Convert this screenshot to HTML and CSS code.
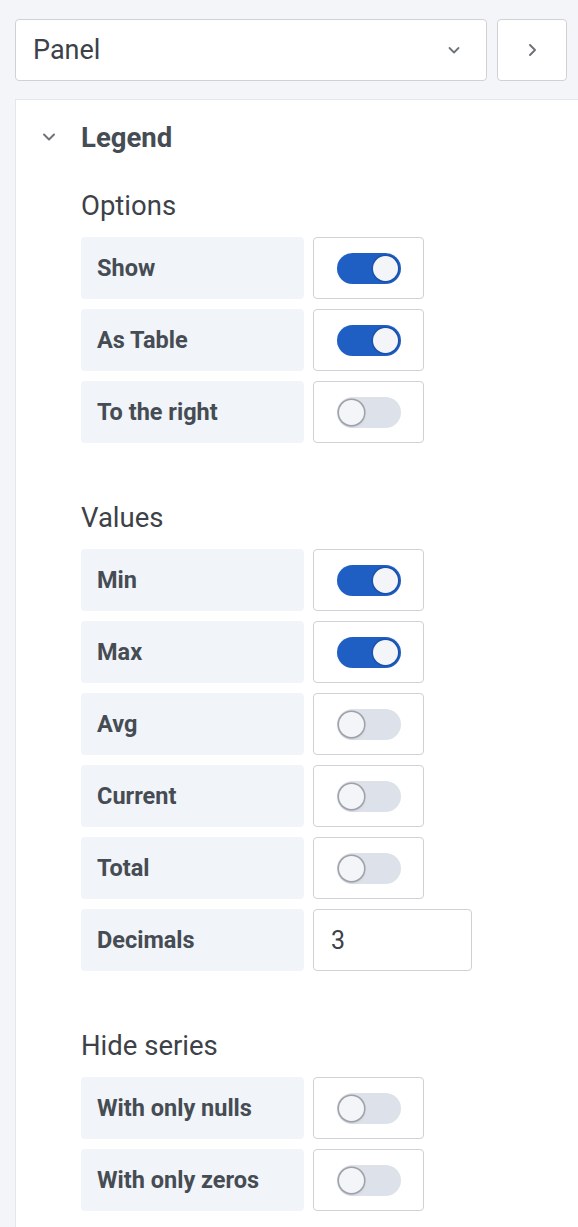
FILE: index.html
```html
<!DOCTYPE html>
<html lang="en">
<head>
  <meta charset="UTF-8">
  <title>Panel options - Legend</title>
  <meta name="viewport" content="width=device-width, initial-scale=1">
  <link rel="stylesheet" href="styles.css">
</head>
<body>

  <div class="toolbar">
    <div class="select">
      <span>Panel</span>
      <svg class="caret" width="16" height="16" viewBox="0 0 16 16"><path d="M3.5 6 L8 10.5 L12.5 6" fill="none" stroke="#6e737b" stroke-width="1.8" stroke-linecap="round" stroke-linejoin="round"/></svg>
    </div>
    <button class="next-btn">
      <svg width="18" height="18" viewBox="0 0 18 18"><path d="M7 4 L12 9 L7 14" fill="none" stroke="#6e737b" stroke-width="2" stroke-linecap="round" stroke-linejoin="round"/></svg>
    </button>
  </div>

  <div class="panel">
    <div class="legend-head">
      <svg class="collapse" width="18" height="18" viewBox="0 0 18 18"><path d="M4 6.5 L9 11.5 L14 6.5" fill="none" stroke="#6e737b" stroke-width="2" stroke-linecap="round" stroke-linejoin="round"/></svg>
      <h2>Legend</h2>
    </div>

    <!-- Options -->
    <div class="group">
      <h3>Options</h3>
      <div class="row"><div class="label">Show</div><div class="field"><span class="switch on"></span></div></div>
      <div class="row"><div class="label">As Table</div><div class="field"><span class="switch on"></span></div></div>
      <div class="row"><div class="label">To the right</div><div class="field"><span class="switch"></span></div></div>
    </div>

    <!-- Values -->
    <div class="group">
      <h3>Values</h3>
      <div class="row"><div class="label">Min</div><div class="field"><span class="switch on"></span></div></div>
      <div class="row"><div class="label">Max</div><div class="field"><span class="switch on"></span></div></div>
      <div class="row"><div class="label">Avg</div><div class="field"><span class="switch"></span></div></div>
      <div class="row"><div class="label">Current</div><div class="field"><span class="switch"></span></div></div>
      <div class="row"><div class="label">Total</div><div class="field"><span class="switch"></span></div></div>
      <div class="row"><div class="label">Decimals</div><div class="field input">3</div></div>
    </div>

    <!-- Hide series -->
    <div class="group">
      <h3>Hide series</h3>
      <div class="row"><div class="label">With only nulls</div><div class="field"><span class="switch"></span></div></div>
      <div class="row"><div class="label">With only zeros</div><div class="field"><span class="switch"></span></div></div>
    </div>
  </div>

</body>
</html>
```

FILE: styles.css
```css
* {
  margin: 0;
  padding: 0;
  box-sizing: border-box;
}

html, body {
  height: 100%;
  font-family: Roboto, 'Liberation Sans', sans-serif;
  background: #f4f5f8;
  color: #464c54;
  overflow: hidden;
}

body {
  display: flex;
  flex-direction: column;
  padding: 19px 0 0 15px;
}

.toolbar {
  display: flex;
  gap: 10px;
  height: 62px;
  flex-shrink: 0;
  padding-right: 11px;
}

.select {
  flex: 1;
  display: flex;
  align-items: center;
  justify-content: space-between;
  padding: 0 24px 0 17px;
  background: #fff;
  border: 1px solid #cfd1d5;
  border-radius: 4px;
  font-size: 27px;
  color: #3d4148;
}

.next-btn {
  width: 70px;
  display: flex;
  align-items: center;
  justify-content: center;
  background: #fff;
  border: 1px solid #cfd1d5;
  border-radius: 4px;
}

.panel {
  flex: 1;
  margin-top: 18px;
  background: #fff;
  border-top: 1px solid #e4e6ea;
  border-left: 1px solid #e4e6ea;
  padding: 19px 0 0 65px;
}

.legend-head {
  display: flex;
  align-items: center;
  height: 36px;
  position: relative;
}

.collapse {
  position: absolute;
  left: -41px;
  top: 9px;
}

.legend-head h2 {
  font-size: 27.5px;
  font-weight: 700;
  color: #464c54;
}

.group {
  display: flex;
  flex-direction: column;
  gap: 10px;
  margin-top: 33px;
}

.group + .group {
  margin-top: 57px;
}

.group h3 {
  font-size: 27.5px;
  font-weight: 400;
  line-height: 36px;
  color: #3d4148;
  margin-bottom: 3px;
}

.row {
  display: flex;
  gap: 9px;
  height: 62px;
}

.label {
  width: 223px;
  display: flex;
  align-items: center;
  padding-left: 16px;
  background: #f1f4f8;
  border-radius: 4px;
  font-size: 23.5px;
  font-weight: 700;
  color: #464c54;
}

.field {
  width: 111px;
  display: flex;
  align-items: center;
  justify-content: center;
  border: 1px solid #cfd1d5;
  border-radius: 4px;
  background: #fff;
}

.field.input {
  width: 159px;
  justify-content: flex-start;
  padding-left: 17px;
  font-size: 25px;
  color: #3d4148;
}

.switch {
  position: relative;
  width: 64px;
  height: 31px;
  border-radius: 16px;
  background: #dde2ea;
}

.switch::after {
  content: '';
  position: absolute;
  top: 3px;
  left: 2px;
  width: 25px;
  height: 25px;
  border-radius: 50%;
  background: #f4f5f8;
  box-shadow: 0 0 0 1.5px #9ea2a8, 0 1px 3px rgba(0, 0, 0, 0.3);
}

.switch.on {
  background: #1f5fc4;
}

.switch.on::after {
  left: auto;
  right: 3px;
  box-shadow: 0 0 0 1.5px #1a52aa;
}
```
